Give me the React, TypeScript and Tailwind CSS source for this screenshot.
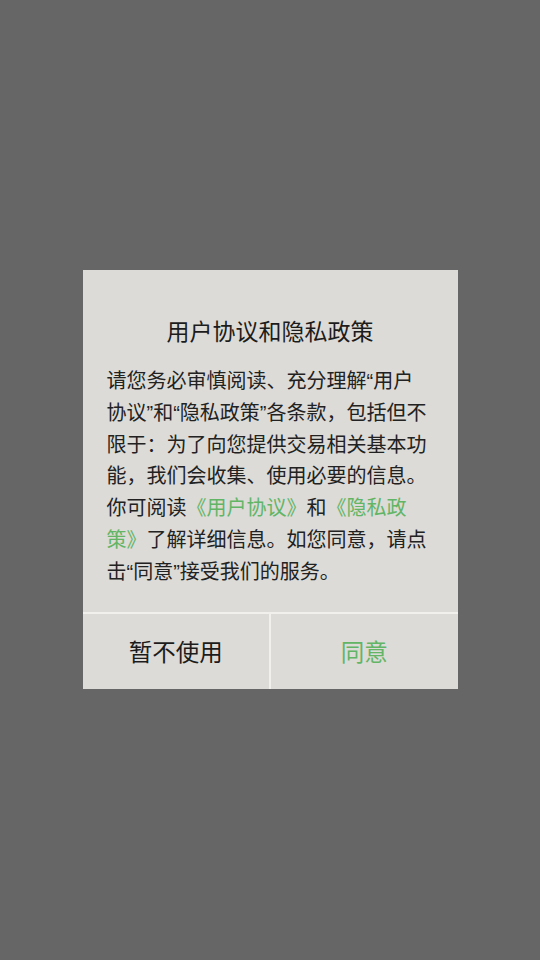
const font = {
  fontFamily:
    '"Liberation Sans", "Noto Sans CJK SC", "Noto Sans", sans-serif',
};

const Link = ({ children }: { children: React.ReactNode }) => (
  <span className="text-[#62b565]">{children}</span>
);

const App = () => {
  return (
    <div
      className="flex h-[960px] w-[540px] items-start justify-center bg-[#666666] pt-[270px]"
      style={font}
    >
      <div className="flex w-[375px] flex-col bg-[#dcdbd7]">
        <h1 className="pt-[47px] text-center text-[23px] leading-[30px] text-[#1c1c1c]">
          用户协议和隐私政策
        </h1>
        <p className="px-6 pt-[19px] text-[20px] leading-[31.8px] text-[#222222]">
          请您务必审慎阅读、充分理解“用户
          <br />
          协议”和“隐私政策”各条款，包括但不
          <br />
          限于：为了向您提供交易相关基本功
          <br />
          能，我们会收集、使用必要的信息。
          <br />
          你可阅读<Link>《用户协议》</Link>和<Link>《隐私政</Link>
          <br />
          <Link>策》</Link>了解详细信息。如您同意，请点
          <br />
          击“同意”接受我们的服务。
        </p>
        <div className="mt-[23px] flex h-[77px] border-t-2 border-[#f1f0ec]">
          <button className="flex-1 pt-[5px] text-[23.5px] text-[#1c1c1c]">暂不使用</button>
          <div className="w-[2px] bg-[#f1f0ec]" />
          <button className="flex-1 pt-[5px] text-[23.5px] text-[#62b565]">同意</button>
        </div>
      </div>
    </div>
  );
};

export default App;
